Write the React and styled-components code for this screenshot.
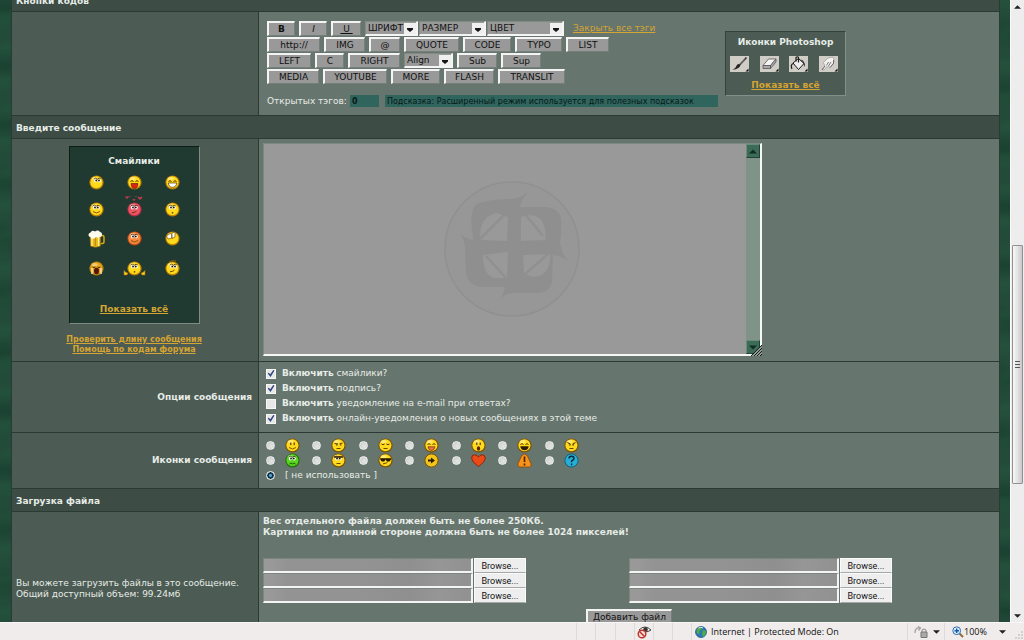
import React from "react";
import styled, { createGlobalStyle } from "styled-components";

const GlobalStyle = createGlobalStyle`
    * {
        box-sizing: border-box;
    }

    body {
        margin: 0;
        overflow: hidden;
        font-family: "DejaVu Sans", Verdana, sans-serif;
        font-size: 9px;
        line-height: 11px;
        color: #e6ece7;
    }

    button, input, select, textarea {
        margin: 0;
        font: inherit;
        border-radius: 0;
    }
`;

const Window = styled.div`
    display: flex;
    flex-direction: column;
    height: 100vh;
`;

const Viewport = styled.div`
    display: flex;
    flex: 1;
    min-height: 0;
`;

const Page = styled.main`
    flex: 1;
    min-width: 0;
    overflow: hidden;
    padding: 0 10px 0 11px;
    background:
        repeating-linear-gradient(172deg, transparent 0 9px, rgba(40, 100, 66, 0.25) 17px, transparent 31px),
        repeating-linear-gradient(8deg, transparent 0 23px, rgba(12, 45, 32, 0.3) 38px, transparent 57px),
        #224b39;
`;

/* the page is scrolled down, so the first heading is cut by the window */
const Form = styled.form`
    display: flex;
    flex-direction: column;
    gap: 1px;
    margin-top: -11px;
    padding: 0 1px;
    background: #293b33;
`;

const Heading = styled.h2`
    margin: 0;
    padding: 2px 4px 0;
    font-size: 9px;
    line-height: 20px;
    font-weight: bold;
    background: #3d4c44;
`;

const Row = styled.div`
    display: grid;
    grid-template-columns: 246px 1fr;
    gap: 1px;
    min-height: ${(props) => props.$height}px;
`;

const LabelCell = styled.div`
    display: flex;
    flex-direction: column;
    justify-content: center;
    align-items: ${(props) => props.$align || "flex-start"};
    padding: 5px 6px 5px 4px;
    background: #4c5b53;
`;

const Cell = styled.div`
    min-width: 0;
    padding: ${(props) => props.$pad || "4px"};
    background: #66756d;
`;

const Link = styled.a`
    color: #d5a432;
    font-size: ${(props) => (props.$small ? 8 : 9)}px;
    line-height: ${(props) => (props.$small ? 10 : 11)}px;
    font-weight: ${(props) => (props.$bold ? "bold" : "normal")};
    text-decoration: underline;
`;

const Editor = styled.div`
    display: flex;
    gap: 7px;
`;

const Tools = styled.div`
    width: 451px;
`;

const ToolLine = styled.div`
    display: flex;
    align-items: flex-start;
    gap: 4px;
    height: 16px;
`;

const Button = styled.button`
    width: ${(props) => props.$width}px;
    height: 15px;
    padding: 0;
    font-size: 9px;
    line-height: 12px;
    text-align: center;
    white-space: nowrap;
    color: #111;
    background: #999;
    border: 1px solid #777f7a;
    border-width: 2px 1px 1px 2px;
    border-top-color: #f4f4f4;
    border-left-color: #f4f4f4;
`;

const SelectGroup = styled.div`
    display: flex;
    gap: 1px;
`;

const SelectBox = styled.div`
    position: relative;
    width: ${(props) => props.$width}px;
    height: 15px;

    svg {
        position: absolute;
        top: 2px;
        right: 2px;
        pointer-events: none;
    }
`;

const Select = styled.select`
    display: block;
    width: 100%;
    height: 15px;
    padding: 0 2px;
    font-size: 9px;
    color: #111;
    background: #999;
    appearance: none;
    border: 1px solid #818a85;
    border-right: 2px solid #f4f4f4;
    border-bottom: 2px solid #f4f4f4;
`;

const TagLine = styled.div`
    display: flex;
    align-items: center;
    gap: 3px;
    margin-top: 10px;
`;

const TagInput = styled.input`
    width: ${(props) => props.$width};
    flex: ${(props) => (props.$grow ? 1 : "none")};
    margin-left: ${(props) => (props.$grow ? 3 : 0)}px;
    height: 12px;
    padding: 0 2px;
    border: 0;
    font-size: 8px;
    font-weight: ${(props) => (props.$grow ? "normal" : "bold")};
    color: #071918;
    background: #2f655d;
`;

const PhotoPanel = styled.section`
    display: flex;
    flex-direction: column;
    align-items: center;
    justify-content: space-between;
    width: 121px;
    height: 65px;
    margin-top: 10px;
    padding: 5px 4px 4px;
    background: #4c5b53;
    border: 1px solid #33433b;
    border-right-color: #82908a;
    border-bottom-color: #82908a;
`;

const PanelTitle = styled.h3`
    margin: 0;
    font-size: 9px;
    line-height: 11px;
`;

const PhotoIcons = styled.div`
    display: flex;
    justify-content: space-between;
    width: 100%;
    padding-right: 3px;
`;

const SmilePanel = styled.section`
    display: flex;
    flex-direction: column;
    align-items: center;
    width: 131px;
    height: 178px;
    margin-bottom: 11px;
    padding: 9px 6px 8px;
    background: #203a31;
    border: 1px solid #0c1e18;
    border-right-color: #7d8c84;
    border-bottom-color: #7d8c84;
`;

const SmileGrid = styled.div`
    display: grid;
    grid-template-columns: repeat(3, 38px);
    grid-template-rows: 26px 28px 30px 30px;
    align-items: center;
    justify-items: center;
    flex: 1;
    margin-top: 3px;

    svg {
        overflow: visible;
    }
`;

const IconButton = styled.button`
    display: block;
    padding: 0;
    border: 0;
    background: none;
    line-height: 0;
`;

const MessageBox = styled.div`
    display: flex;
    position: relative;
    max-width: 499px;
    height: 213px;
    background: #999;
    border: 1px solid #788a81;
    border-right: 2px solid #f6f8f6;
    border-bottom: 2px solid #f6f8f6;
`;

const Message = styled.textarea`
    flex: 1;
    min-width: 0;
    padding: 3px;
    border: 0;
    outline: 0;
    resize: none;
    background: transparent;
    color: #111;
    z-index: 1;
`;

const Watermark = styled.svg`
    position: absolute;
    top: 50%;
    left: 50%;
    width: 138px;
    height: 138px;
    transform: translate(-50%, -50%);
`;

const Grip = styled.svg`
    position: absolute;
    right: -2px;
    bottom: -2px;
`;

const BoxScroll = styled.div`
    display: flex;
    flex-direction: column;
    justify-content: space-between;
    width: 14px;
    background: #7f9389;
`;

const BoxArrow = styled.button`
    display: flex;
    align-items: center;
    justify-content: center;
    width: 14px;
    height: 14px;
    padding: 0;
    background: #3c6b58;
    border: 1px solid #6b8c7d;
    border-right-color: #1f4234;
    border-bottom-color: #1f4234;
`;

const Options = styled.div`
    display: flex;
    flex-direction: column;
`;

const Option = styled.label`
    display: flex;
    align-items: center;
    gap: 6px;
    height: 15px;
    white-space: pre;
`;

const Checkbox = styled.input.attrs({ type: "checkbox" })`
    display: grid;
    place-items: center;
    width: 10px;
    height: 10px;
    appearance: none;
    background: #e6e8e8;
    border: 1px solid #f6f6f6;

    &:checked::after {
        content: "";
        width: 7px;
        height: 7px;
        background: #34457f;
        clip-path: polygon(0 45%, 18% 38%, 40% 62%, 82% 0, 100% 8%, 44% 100%);
    }
`;

const Radio = styled.input.attrs({ type: "radio" })`
    width: 9px;
    height: 9px;
    appearance: none;
    border-radius: 50%;
    border: 1px solid #f1f2f2;
    background: radial-gradient(circle at 60% 60%, #e4e6e5, #c2c7c4);

    &:checked {
        border-color: #e9eff2;
        background: radial-gradient(circle, #4fa5cf 0 1px, #143449 2px 3px, #b8c9d0 4px);
    }
`;

const RadioGrid = styled.div`
    display: grid;
    grid-template-columns: repeat(7, 1fr);
    width: 325px;
`;

const RadioLabel = styled.label`
    display: flex;
    align-items: center;
    gap: 10px;
    height: 15px;
    white-space: pre;
`;

const Notice = styled.p`
    margin: 0 0 20px;
    font-weight: bold;
`;

const Uploads = styled.div`
    display: grid;
    grid-template-columns: 1fr 1fr;
    margin-bottom: 6px;
`;

const Upload = styled.div`
    display: flex;
    gap: 1px;
    height: 15px;
`;

const FileName = styled.input`
    width: 210px;
    height: 15px;
    padding: 0 3px;
    background: linear-gradient(100deg, #999 0 4%, #939393 12% 45%, #8f8f8f 70%, #969696 84%, #919191);
    border: 1px solid #7c8580;
    border-right: 2px solid #f4f4f4;
    border-bottom: 2px solid #f4f4f4;
`;

const Browse = styled.button`
    width: 52px;
    height: 15px;
    padding: 0;
    font-family: Roboto, sans-serif;
    font-size: 9px;
    line-height: 12px;
    color: #111;
    background: #eee;
    border: 1px solid #fafafa;
    border-bottom-color: #a4a8a6;
`;

const Submit = styled.div`
    display: flex;
    justify-content: center;
`;

const PageScroll = styled.div`
    display: flex;
    flex-direction: column;
    align-items: center;
    width: 14px;
    padding: 5px 0 4px;
    background: #ededed;
    border-left: 1px solid #fafafa;
`;

const Track = styled.div`
    flex: ${(props) => props.$part};
`;

const Thumb = styled.div`
    display: flex;
    align-items: center;
    justify-content: center;
    width: 11px;
    height: 239px;
    border: 1px solid #919191;
    border-radius: 1px;
    background: linear-gradient(90deg, #f8f8f8, #e3e3e3 50%, #c8c8ca);
`;

const StatusBar = styled.footer`
    display: flex;
    justify-content: flex-end;
    height: 18px;
    background: #efeceb;
    border-top: 1px solid #f8f6f6;
    font-family: "Open Sans", sans-serif;
    font-size: 9px;
    color: #111;
`;

const StatusCell = styled.div`
    display: flex;
    align-items: center;
    gap: ${(props) => props.$gap || 0}px;
    width: ${(props) => props.$width}px;
    padding-left: ${(props) => props.$pad || 4}px;
    white-space: nowrap;
    border-left: 1px solid #dedad9;
`;

const FaceEyes = ({ kind }) => {
    if (kind === "none") return null;
    if (kind === "closed") return <path d="M3.5 6.5q1.5-1.6 3 0M8.5 6.5q1.5-1.6 3 0" fill="none" stroke="#3a2300" strokeWidth="0.9" />;
    if (kind === "sad") return <path d="M3.5 6q1.5 1.4 3 0M8.5 6q1.5 1.4 3 0" fill="none" stroke="#3a2300" strokeWidth="0.9" />;
    if (kind === "dots") return <path d="M5.8 4.5v2.6M9.2 4.5v2.6" stroke="#3a2300" strokeWidth="1" />;
    if (kind === "angry") return <path d="M3.5 4.5l3 1.8M11.5 4.5l-3 1.8M5 7h1.5M8.5 7h1.5" stroke="#3a2300" strokeWidth="1" />;
    if (kind === "flat") return <path d="M3.5 5.5l3.5 .5M8.5 6l3-1M5 7h1.5M9 7h1.5" stroke="#3a2300" strokeWidth="0.9" />;
    if (kind === "glasses") return <path d="M2 5.2h11v1.5l-1.6 1.7H9L7.6 6.5 6.2 8.4H3.8L2.4 6.7z" fill="#241900" />;
    const dx = kind === "side" ? 1.2 : 0;
    return (
        <g>
            <path d={`M${3.6 + dx} 4.200q1.800-2 3.600 0q1.800-2 3.600 0`} fill="none" stroke="#3a2300" strokeWidth="0.8" />
            <ellipse cx={5.5 + dx} cy="5.6" rx="1.6" ry="1.9" fill="#fff" />
            <ellipse cx={9.2 + dx} cy="5.6" rx="1.6" ry="1.9" fill="#fff" />
            <circle cx={6 + dx} cy="5.5" r="0.9" fill="#111" />
            <circle cx={8.8 + dx} cy="5.5" r="0.9" fill="#111" />
        </g>
    );
};

const mouths = {
    smile: <path d="M4 9.500q3.500 3 7 0" fill="none" stroke="#7a4800" strokeWidth="0.9" />,
    flat: <path d="M5.5 10.5h4" stroke="#5a3500" strokeWidth="0.9" />,
    smirk: <path d="M5 10.8q3-.2 4.5-1.6" fill="none" stroke="#5a3500" strokeWidth="0.9" />,
    tongue: <path d="M4 8.5h7q-.5 5-3.5 5T4 8.5z" fill="#da2416" stroke="#5a1500" strokeWidth="0.6" />,
    pink: <path d="M4 8.8h7q-.7 3.7-3.5 3.7T4 8.8z" fill="#e87450" stroke="#5a1500" strokeWidth="0.6" />,
    grin: <path d="M3.3 8h8.4q-.5 4.3-4.2 4.3T3.3 8z" fill="#fff" stroke="#5a3500" strokeWidth="0.7" />,
    laugh: <path d="M3.3 8.3h8.4q-.5 4-4.2 4t-4.2-4z" fill="#2d1b00" />,
    open: <ellipse cx="7.5" cy="10.5" rx="1.7" ry="2.3" fill="#5a2500" />,
    small: <circle cx="7.5" cy="10.8" r="0.9" fill="#7a4500" />,
    wave: <path d="M4.5 11l1.5-1 1.5 1L9 10l1.5 1" fill="none" stroke="#174b0c" strokeWidth="0.9" />,
};

function Smile({ eyes = "wide", mouth = "smile", tone = "#ffd91c", edge = "#b87d05", size = 15, children }) {
    return (
        <svg width={size} height={size} viewBox="0 0 15 15">
            <circle cx="7.5" cy="7.5" r="7.100" fill={edge} />
            <circle cx="7.4" cy="7.2" r="6" fill={tone} />
            <ellipse cx="5.6" cy="3.4" rx="3" ry="1.5" fill="#fff" opacity="0.4" />
            <FaceEyes kind={eyes} />
            {mouths[mouth]}
            {children}
        </svg>
    );
}

function Beer() {
    return (
        <svg width="17" height="18" viewBox="0 0 17 18">
            <path d="M12.5 5.5h2q1.5 0 1.5 2v4q0 2-1.5 2h-2" fill="none" stroke="#dba713" strokeWidth="1.5" />
            <path d="M2 4h10.5v12q-5 2.500-10 0z" fill="#e8b81b" stroke="#9a6c05" strokeWidth="0.6" />
            <path d="M4 7v9M10.500 7v9" stroke="#fff0a0" strokeWidth="1.2" />
            <path d="M7.300 7v9" stroke="#b98408" />
            <path d="M1 6.500Q-.5 3.500 2.500 2.500 4-.2 7 1.500 10-.5 12 2q3 .5 1.500 4.500l-2 .5-1.500 1-2-1-2 2-1-1-1 1.500L2.500 7z" fill="#fffdf0" />
        </svg>
    );
}

function Badge({ kind }) {
    return (
        <svg width="15" height="15" viewBox="0 0 15 15">
            {kind === "arrow" && (
                <g>
                    <circle cx="7.5" cy="7.5" r="6.6" fill="#f3c51b" stroke="#7c5405" />
                    <path d="M4 6.500H7V4.500l4 3-4 3V8.500H4z" fill="#2d1d00" />
                </g>
            )}
            {kind === "heart" && (
                <path d="M7.500 13.500Q.7 8.500.7 5t3-3.200q2.700 0 3.800 2.300 1.100-2.300 3.800-2.300T14.300 5q0 3.500-6.800 8.500z" fill="#ea4a16" stroke="#872004" strokeWidth="0.9" />
            )}
            {kind === "warn" && (
                <g>
                    <path d="M4.300 3.500Q7.500-1.500 10.700 3.500L14 10.500q1 3-1.800 3.500H2.800Q0 13.500 1 10.500z" fill="#f5921a" stroke="#914c04" strokeWidth="0.9" />
                    <path d="M7.500 3.500v5.500M7.500 10.500v2" stroke="#482200" strokeWidth="1.600" />
                </g>
            )}
            {kind === "question" && (
                <g>
                    <circle cx="7.500" cy="7.500" r="6.600" fill="#28afd5" stroke="#11617e" />
                    <path d="M5 5.500Q5 3.300 7.500 3.300T10 5.500q0 1.300-2.400 2.400v1.400M7.600 10.500v1.700" fill="none" stroke="#06293a" strokeWidth="1.400" />
                </g>
            )}
        </svg>
    );
}

function PhotoIcon({ kind }) {
    return (
        <svg width="19" height="16" viewBox="0 0 19 16">
            <path d="M0 0h19v16H0z" fill="#cfcdc6" />
            <path d="M18.500 12.500v3h-3z" fill="#111" />
            {kind === "brush" && (
                <g>
                    <path d="M16.500 1.500L9.500 9" stroke="#3a3a38" strokeWidth="1.800" />
                    <path d="M10.500 8.500q-.5 4.500-8 5.300 3.500-1.800 4.300-4.600 1.400-2 3.700-.7z" fill="#262624" />
                    <path d="M14.500 3.500l-4.500 5" stroke="#a8a8a2" strokeWidth="0.600" />
                </g>
            )}
            {kind === "eraser" && (
                <g stroke="#55555a" strokeWidth="0.800" strokeLinejoin="round">
                    <path d="M3 9.500l5.500-6.500h7.500l-5.500 6.500z" fill="#f4f4f2" />
                    <path d="M3 9.500h7.500v3H3zM10.500 9.500L16 3v3l-5.500 6.500z" fill="#aaa" />
                </g>
            )}
            {kind === "bucket" && (
                <g>
                    <path d="M4 7l5.500-4.500 5.500 5-5.500 6z" fill="#eee" stroke="#1c1c1c" />
                    <path d="M4.500 7.500Q1 8.500 3 13M7 5.500V1.500q1.500-1.500 2.500 0v5" fill="none" stroke="#1c1c1c" strokeWidth="1.200" />
                    <path d="M11.500 3.500q4.500 1 4.500 7.500-1.500-2-1.700-4.500z" fill="#1c1c1c" />
                </g>
            )}
            {kind === "smudge" && (
                <g>
                    <path d="M3 13.500L6 10 4.500 6.500 9 2l5-1q2 3 .5 6l-3.500 4.500-1.500-1-2 .5-2.500 3z" fill="#f2f2ef" stroke="#8b8b8d" strokeWidth="0.600" />
                    <path d="M14.500 4v3.500l-3.500 4M9.500 10l2.500-4M7.500 9.500l2-3.500M3 14l3-4" fill="none" stroke="#55555a" strokeWidth="0.800" />
                </g>
            )}
        </svg>
    );
}

const Arrow = ({ up, color = "#222", size = 7 }) => (
    <svg width={size} height={size - 3} viewBox="0 0 8 4" aria-hidden="true">
        <path d={up ? "M0 4l4-4 4 4z" : "M0 0h8L4 4z"} fill={color} />
    </svg>
);

function DropDown({ label, width }) {
    return (
        <SelectBox $width={width}>
            <Select aria-label={label}>
                <option>{label}</option>
            </Select>
            <svg width="12" height="11" viewBox="0 0 12 11">
                <path d="M0 0h12v11H0z" fill="#efefef" />
                <path d="M3 5h6v1.500L6 9 3 6.500z" fill="#151515" />
            </svg>
        </SelectBox>
    );
}

const codeRows = [
    [["http://", 53], ["IMG", 41], ["@", 31], ["QUOTE", 55], ["CODE", 48], ["TYPO", 47], ["LIST", 43]],
    [["LEFT", 44], ["C", 29], ["RIGHT", 52]],
    [["MEDIA", 52], ["YOUTUBE", 64], ["MORE", 49], ["FLASH", 50], ["TRANSLIT", 67]],
];

const Codes = ({ items }) => items.map(([label, width]) => (
    <Button type="button" key={label} $width={width}>{label}</Button>
));

const CloseTags = styled(Link)`
    padding: 2px 5px;
    white-space: nowrap;
`;

function Toolbar() {
    return (
        <Tools>
            <ToolLine>
                <Button type="button" $width={28}><b>B</b></Button>
                <Button type="button" $width={28}><i>I</i></Button>
                <Button type="button" $width={30}><u>&nbsp;U&nbsp;</u></Button>
                <SelectGroup>
                    <DropDown label="ШРИФТ" width={53} />
                    <DropDown label="РАЗМЕР" width={67} />
                    <DropDown label="ЦВЕТ" width={77} />
                </SelectGroup>
                <CloseTags href="#tags">Закрыть все тэги</CloseTags>
            </ToolLine>
            <ToolLine><Codes items={codeRows[0]} /></ToolLine>
            <ToolLine>
                <Codes items={codeRows[1]} />
                <DropDown label="Align" width={49} />
                <Codes items={[["Sub", 40], ["Sup", 40]]} />
            </ToolLine>
            <ToolLine><Codes items={codeRows[2]} /></ToolLine>
            <TagLine>
                <label htmlFor="tagcount">Открытых тэгов:</label>
                <TagInput id="tagcount" $width="29px" defaultValue="0" readOnly />
                <TagInput
                    aria-label="Подсказка"
                    $grow
                    $width="0"
                    defaultValue="Подсказка: Расширенный режим используется для полезных подсказок"
                    readOnly
                />
            </TagLine>
        </Tools>
    );
}

const smiles = [
    <Smile eyes="side" mouth="none" />,
    <Smile eyes="closed" mouth="tongue" />,
    <Smile eyes="closed" mouth="grin" />,
    <Smile />,
    <Smile tone="#ed5565" edge="#b02e49" mouth="smirk">
        <path d="M0-3l-2-2 1-1 1 1 1-1 1 1zM7-1L5.500-2.500l.7-.7.8.7.8-.7.700.7zM13-2l-2.500-2.500 1-1 1.500 1 1.500-1 1 1zM3-5l-1-1h2zM9-5l-1-1h2z" fill="#c23a50" />
    </Smile>,
    <Smile mouth="small" />,
    <Beer />,
    <Smile tone="#f88a3d" edge="#c34a19" />,
    <Smile eyes="none" mouth="none">
        <path d="M1.500 5l4.500-3 1 5-4 1zM7 2l3-1v5L7 7.500z" fill="#fff" stroke="#7b5500" strokeWidth="0.700" />
    </Smile>,
    <Smile eyes="sad" tone="#e8a51b" mouth="none">
        <path d="M3 7v6M12 7v6" stroke="#f5edca" strokeWidth="1.300" />
        <ellipse cx="7.500" cy="10" rx="2.500" ry="3.300" fill="#541407" />
    </Smile>,
    <Smile mouth="small">
        <path d="M-3 9.500l2 2 2 .500-1 2h-3zM18 9.500l-2 2-2 .500 1 2h3z" fill="#ffd01a" stroke="#a76a05" strokeWidth="0.600" />
    </Smile>,
    <Smile eyes="side" mouth="smirk">
        <path d="M4 1Q7-1 11 0" fill="none" stroke="#946100" />
    </Smile>,
];

const outline = "#7c5405";

const messageIcons = [
    <Smile eyes="dots" edge={outline} />,
    <Smile eyes="flat" mouth="flat" edge={outline} />,
    <Smile eyes="sad" mouth="flat" edge={outline} />,
    <Smile eyes="closed" mouth="pink" edge={outline} />,
    <Smile eyes="dots" mouth="open" edge={outline} />,
    <Smile eyes="closed" mouth="laugh" edge={outline} />,
    <Smile eyes="angry" mouth="flat" edge={outline} />,
    <Smile mouth="wave" tone="#58d51f" edge="#246e0a" />,
    <Smile mouth="flat" edge={outline}><path d="M3 4h9" stroke="#3a2300" strokeWidth="1.500" /></Smile>,
    <Smile eyes="glasses" mouth="smirk" edge={outline} />,
    <Badge kind="arrow" />,
    <Badge kind="heart" />,
    <Badge kind="warn" />,
    <Badge kind="question" />,
];

const options = [
    ["смайлики?", true],
    ["подпись?", true],
    ["уведомление на e-mail при ответах?", false],
    ["онлайн-уведомления о новых сообщениях в этой теме", true],
];

function MessageArea() {
    return (
        <MessageBox>
            <Watermark viewBox="0 0 138 138">
                <circle cx="69" cy="69" r="67" fill="#979797" stroke="#909090" strokeWidth="1.500" />
                <path
                    d="M30 57Q26 33 32 26 36 20 67 19q10 0 18-7-7 8-8 15h24q15 0 17 12 1 12-1 24 1 10 8 18-8-6-15-6l-1 26q-2 12-15 12H70q-10 1-16 9 7-7 8-15H37q-13-3-14-15l-1-25Q21 57 15 52q5 6 15 8z"
                    fill="#8f8f8f"
                />
                <path
                    d="M37 60Q36 36 54 33l11 4-1 24zM78 37q14-5 21 4 5 8 3 19l-24 1zM40 75l25-3-1 26H52Q40 96 40 75zM80 75l27-1q1 14-7 20-9 6-19-1z"
                    fill="#999"
                />
                <path d="M37 59l24-24M82 34l18 22M43 76l20 22M81 95l24-21" stroke="#909090" strokeWidth="2.500" />
            </Watermark>
            <Message aria-label="Введите сообщение" />
            <BoxScroll>
                <BoxArrow type="button" aria-label="Вверх"><Arrow up color="#102d22" size={8} /></BoxArrow>
                <BoxArrow type="button" aria-label="Вниз"><Arrow color="#102d22" size={8} /></BoxArrow>
            </BoxScroll>
            <Grip width="12" height="12" viewBox="0 0 12 12">
                <path d="M1 12L12 1v11z" fill="#56655d" />
                <path d="M1 12L12 1M4 12l8-8M7 12l5-5M10 12l2-2" stroke="#171f1b" />
                <path d="M2.500 12L12 2.500M5.500 12L12 5.500M8.500 12L12 8.500" stroke="#e9edeb" strokeWidth="0.800" />
            </Grip>
        </MessageBox>
    );
}

const ZoomText = styled.span`
    width: 35px;
`;

const Corner = styled.svg`
    align-self: flex-end;
    margin-left: auto;
`;

function Status() {
    return (
        <StatusBar>
            <StatusCell $width={19} />
            <StatusCell $width={20} />
            <StatusCell $width={19} />
            <StatusCell $width={19} $pad={2}>
                <svg width="15" height="14" viewBox="0 0 15 14">
                    <path d="M2 5Q8-1 14 5 8 9 2 5z" fill="#fff" stroke="#444" />
                    <circle cx="8.500" cy="4.500" r="2.300" fill="#333" />
                    <circle cx="5" cy="9" r="3.800" fill="#f5dddd" stroke="#c23327" strokeWidth="1.400" />
                    <path d="M2.500 6.500l5 5" stroke="#c23327" strokeWidth="1.400" />
                </svg>
            </StatusCell>
            <StatusCell $width={19} />
            <StatusCell $width={19} />
            <StatusCell $width={216} $gap={4} $pad={3}>
                <svg width="12" height="12" viewBox="0 0 12 12">
                    <circle cx="6" cy="6" r="5.500" fill="#2e76b8" stroke="#1d4f78" strokeWidth="0.700" />
                    <path d="M2 3q3-3 5-1l-1 2-2 1 1 2-2 1Q1 7 2 3zM8 4l3 1q0 4-3 6L7 8z" fill="#4fae3f" />
                    <path d="M3.500 2Q6 .5 8 2" stroke="#d5efff" fill="none" />
                </svg>
                <span>Internet | Protected Mode: On</span>
            </StatusCell>
            <StatusCell $width={37} $pad={6} $gap={5}>
                <svg width="14" height="12" viewBox="0 0 14 12">
                    <path d="M1 7Q1 1 6 2M4 .500L6.500 2 4.500 4.500" fill="none" stroke="#a2a2a2" strokeWidth="1.300" />
                    <path d="M7 6h6v5.500H7z" fill="#aaa" stroke="#777" />
                    <path d="M8 6V4q2-2 4 0v2" fill="none" stroke="#888" />
                </svg>
                <Arrow size={7} />
            </StatusCell>
            <StatusCell $width={80} $pad={7}>
                <svg width="12" height="12" viewBox="0 0 12 12">
                    <path d="M7.500 7.500L11 11" stroke="#926a36" strokeWidth="2" />
                    <circle cx="4.700" cy="4.700" r="3.900" fill="#d8ecfa" stroke="#326fae" />
                    <path d="M2.500 4.700H7M4.700 2.500V7" stroke="#1459b0" strokeWidth="1.400" />
                </svg>
                <ZoomText>100%</ZoomText>
                <Arrow size={7} />
                <Corner width="9" height="9" viewBox="0 0 9 9">
                    <path d="M6 0h2v2H6zM3 3h2v2H3zM6 3h2v2H6zM0 6h2v2H0zM3 6h2v2H3zM6 6h2v2H6z" fill="#d2cfce" />
                </Corner>
            </StatusCell>
        </StatusBar>
    );
}

export default function App() {
    return (
        <Window>
            <GlobalStyle />
            <Viewport>
                <Page>
                    <Form>
                        <Heading>Кнопки кодов</Heading>
                        <Row $height={103}>
                            <LabelCell />
                            <Cell $pad="9px 8px 6px">
                                <Editor>
                                    <Toolbar />
                                    <PhotoPanel>
                                        <PanelTitle>Иконки Photoshop</PanelTitle>
                                        <PhotoIcons>
                                            {["brush", "eraser", "bucket", "smudge"].map((kind) => (
                                                <IconButton type="button" key={kind} aria-label={kind}>
                                                    <PhotoIcon kind={kind} />
                                                </IconButton>
                                            ))}
                                        </PhotoIcons>
                                        <Link href="#photoshop" $bold>Показать всё</Link>
                                    </PhotoPanel>
                                </Editor>
                            </Cell>
                        </Row>
                        <Heading>Введите сообщение</Heading>
                        <Row $height={222}>
                            <LabelCell $align="center">
                                <SmilePanel>
                                    <PanelTitle>Смайлики</PanelTitle>
                                    <SmileGrid>
                                        {smiles.map((smile, i) => (
                                            <IconButton type="button" key={i} aria-label={`Смайлик ${i + 1}`}>{smile}</IconButton>
                                        ))}
                                    </SmileGrid>
                                    <Link href="#smiles" $bold>Показать всё</Link>
                                </SmilePanel>
                                <Link href="#length" $bold $small>Проверить длину сообщения</Link>
                                <Link href="#help" $bold $small>Помощь по кодам форума</Link>
                            </LabelCell>
                            <Cell>
                                <MessageArea />
                            </Cell>
                        </Row>
                        <Row $height={70}>
                            <LabelCell $align="flex-end"><b>Опции сообщения</b></LabelCell>
                            <Cell $pad="4px 7px">
                                <Options>
                                    {options.map(([text, checked]) => (
                                        <Option key={text}>
                                            <Checkbox defaultChecked={checked} />
                                            <span><b>Включить</b> {text}</span>
                                        </Option>
                                    ))}
                                </Options>
                            </Cell>
                        </Row>
                        <Row $height={55}>
                            <LabelCell $align="flex-end"><b>Иконки сообщения</b></LabelCell>
                            <Cell $pad="5px 7px">
                                <RadioGrid>
                                    {messageIcons.map((icon, i) => (
                                        <RadioLabel key={i}>
                                            <Radio name="iconid" aria-label={`Иконка ${i + 1}`} />
                                            {icon}
                                        </RadioLabel>
                                    ))}
                                </RadioGrid>
                                <RadioLabel>
                                    <Radio name="iconid" defaultChecked />
                                    <span>[ не использовать ]</span>
                                </RadioLabel>
                            </Cell>
                        </Row>
                        <Heading>Загрузка файла</Heading>
                        <Row $height={154}>
                            <LabelCell>
                                <span>Вы можете загрузить файлы в это сообщение.</span>
                                <span>Общий доступный объем: 99.24мб</span>
                            </LabelCell>
                            <Cell>
                                <Notice>
                                    Вес отдельного файла должен быть не более 250Кб.<br />
                                    Картинки по длинной стороне должна быть не более 1024 пикселей!
                                </Notice>
                                <Uploads>
                                    {[1, 2, 3, 4, 5, 6].map((n) => (
                                        <Upload key={n}>
                                            <FileName aria-label={`Файл ${n}`} />
                                            <Browse type="button">Browse...</Browse>
                                        </Upload>
                                    ))}
                                </Uploads>
                                <Submit>
                                    <Button type="button" $width={86}>Добавить файл</Button>
                                </Submit>
                            </Cell>
                        </Row>
                    </Form>
                </Page>
                <PageScroll>
                    <Arrow up size={7} />
                    <Track $part={236} />
                    <Thumb>
                        <svg width="5" height="7" viewBox="0 0 5 7">
                            <path d="M0 .500h5M0 3.500h5M0 6.500h5" stroke="#555" />
                        </svg>
                    </Thumb>
                    <Track $part={130} />
                    <Arrow size={7} />
                </PageScroll>
            </Viewport>
            <Status />
        </Window>
    );
}
